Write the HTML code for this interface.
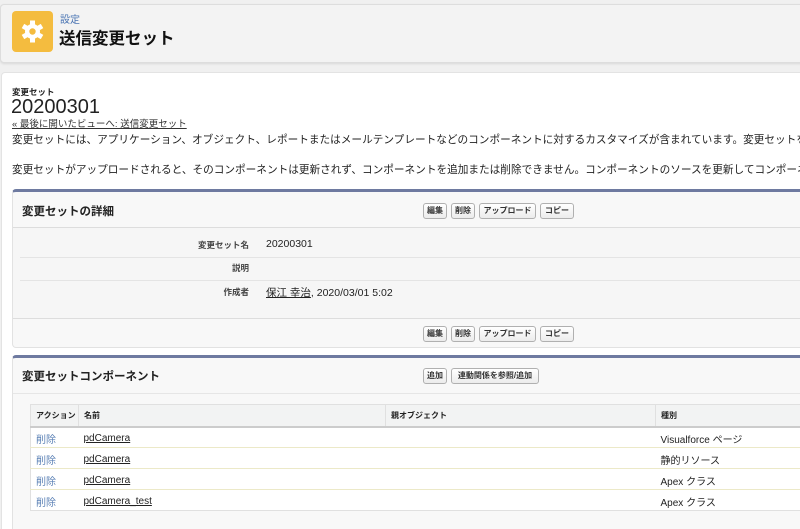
<!DOCTYPE html>
<html style="overflow:hidden;width:800px;height:529px"><head><meta charset="utf-8"><style>
*{box-sizing:border-box;margin:0;padding:0}
body{width:800px;height:529px;overflow:hidden;background:#f0f0f0;font-family:"Liberation Sans","Noto Sans CJK JP",sans-serif;color:#222;position:relative}
.abs{position:absolute;white-space:nowrap}
.hdr{position:absolute;left:0;top:4px;width:806px;height:59px;background:#f3f3f3;border:1px solid #ddd;border-radius:4px;box-shadow:0 1px 2px rgba(0,0,0,.1)}
.icon{position:absolute;left:12px;top:11px;width:41px;height:41px;background:#f4bc3f;border-radius:4px}
.main{position:absolute;left:1px;top:72px;width:805px;height:470px;background:#fff;border:1px solid #e3e3e3;border-radius:4px}
.blk{position:absolute;left:12px;width:796px;background:#f8f8f8;border:1px solid #e2e2e2;border-top:3px solid #6e7aa0;border-radius:4px}
.btn{position:absolute;height:16px;border:1px solid #b0b0b0;border-radius:3px;background:linear-gradient(#fff,#ececec);font-size:8px;font-weight:bold;color:#333;line-height:14px;text-align:center;white-space:nowrap}
.t{font-size:10.5px}
.p{font-size:10.65px}
.lab{font-size:8.5px;font-weight:bold;color:#444;text-align:right;width:100px}
.line{position:absolute;height:1px;background:#e4e4e4}
table{position:absolute;left:30px;top:404px;width:780px;border-collapse:collapse;font-size:10px;background:#fff;border:1px solid #e0e0e0;white-space:nowrap}
th{background:#f2f3f3;height:22px;text-align:left;font-size:8px;padding-left:5px;border-bottom:2px solid #ccc;border-right:1px solid #e0e0e0}
td{height:21px;padding-left:5px;padding-top:2px;border-top:1px solid #ece9c8;vertical-align:middle}
a{color:#222;text-decoration:underline}
.del{color:#5a80b5}
</style></head><body>
<div class="hdr"></div>
<div class="icon"><svg width="41" height="41" viewBox="0 0 41 41"><g fill="#fff" transform="translate(20.5 20.5)"><circle r="7.5"/><g><rect x="-2.5" y="-11" width="5" height="22"/><rect x="-2.5" y="-11" width="5" height="22" transform="rotate(60)"/><rect x="-2.5" y="-11" width="5" height="22" transform="rotate(120)"/></g><circle r="3.2" fill="#f4bc3f"/></g></svg></div>
<div class="abs" style="left:60px;top:11px;font-size:10px;color:#4a74b3">設定</div>
<div class="abs" style="left:59px;top:25px;font-size:16.5px;font-weight:bold;color:#111">送信変更セット</div>
<div class="main"></div>
<div class="abs" style="left:12px;top:86px;font-size:8.5px;font-weight:bold">変更セット</div>
<div class="abs" style="left:11px;top:96px;font-size:20px">20200301</div>
<div class="abs" style="left:12px;top:116px;font-size:9.5px;color:#333;text-decoration:underline">« 最後に開いたビューへ: 送信変更セット</div>
<div class="abs p" style="left:12px;top:132px">変更セットには、アプリケーション、オブジェクト、レポートまたはメールテンプレートなどのコンポーネントに対するカスタマイズが含まれています。変更セットを使用す</div>
<div class="abs p" style="left:12px;top:162px">変更セットがアップロードされると、そのコンポーネントは更新されず、コンポーネントを追加または削除できません。コンポーネントのソースを更新してコンポーネントリ</div>

<div class="blk" style="top:189px;height:159px"></div>
<div class="abs" style="left:22px;top:203px;font-size:11.5px;font-weight:bold">変更セットの詳細</div>
<div class="btn" style="left:423px;top:203px;width:24px">編集</div>
<div class="btn" style="left:451px;top:203px;width:24px">削除</div>
<div class="btn" style="left:479px;top:203px;width:57px">アップロード</div>
<div class="btn" style="left:540px;top:203px;width:34px">コピー</div>
<div class="line" style="left:13px;top:227px;width:790px;background:#ddd"></div>
<div class="line" style="left:13px;top:228px;width:790px;height:90px;background:#f6f6f6"></div>
<div class="abs lab" style="left:149px;top:239px">変更セット名</div><div class="abs t" style="left:266px;top:238px">20200301</div>
<div class="line" style="left:20px;top:257px;width:780px"></div>
<div class="abs lab" style="left:149px;top:262px">説明</div>
<div class="line" style="left:20px;top:280px;width:780px"></div>
<div class="abs lab" style="left:149px;top:286px">作成者</div><div class="abs t" style="left:266px;top:285px"><a>保江 幸治</a>, 2020/03/01 5:02</div>
<div class="line" style="left:13px;top:318px;width:790px;background:#ddd"></div>
<div class="btn" style="left:423px;top:326px;width:24px">編集</div>
<div class="btn" style="left:451px;top:326px;width:24px">削除</div>
<div class="btn" style="left:479px;top:326px;width:57px">アップロード</div>
<div class="btn" style="left:540px;top:326px;width:34px">コピー</div>

<div class="blk" style="top:355px;height:200px"></div>
<div class="abs" style="left:22px;top:368px;font-size:11.5px;font-weight:bold">変更セットコンポーネント</div>
<div class="btn" style="left:423px;top:368px;width:24px">追加</div>
<div class="btn" style="left:451px;top:368px;width:88px">連動関係を参照/追加</div>
<div class="line" style="left:13px;top:393px;width:790px;background:#e6e6e6"></div>
<table>
<tr><th style="width:48px">アクション</th><th style="width:307px">名前</th><th style="width:270px">親オブジェクト</th><th>種別</th></tr>
<tr><td class="del">削除</td><td><a>pdCamera</a></td><td></td><td>Visualforce ページ</td></tr>
<tr><td class="del">削除</td><td><a>pdCamera</a></td><td></td><td>静的リソース</td></tr>
<tr><td class="del">削除</td><td><a>pdCamera</a></td><td></td><td>Apex クラス</td></tr>
<tr><td class="del">削除</td><td><a>pdCamera_test</a></td><td></td><td>Apex クラス</td></tr>
</table>
</body></html>
